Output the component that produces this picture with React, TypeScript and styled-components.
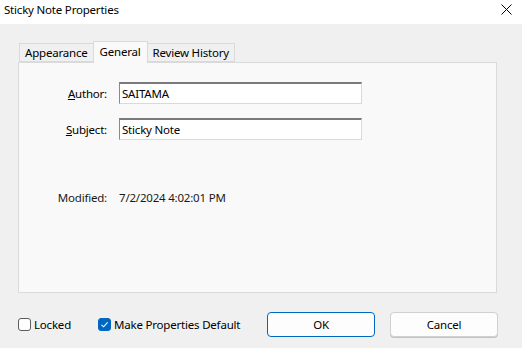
import React from "react";
import styled, { createGlobalStyle } from "styled-components";

const GlobalStyle = createGlobalStyle`
  html, body {
    margin: 0;
    padding: 0;
    background: #f0f0f0;
  }
  body {
    font-family: "Noto Sans", "Open Sans", sans-serif;
    font-size: 11.5px;
    letter-spacing: -0.2px;
    color: #000;
  }
`;

const Window = styled.div`
  width: 522px;
  height: 348px;
  display: flex;
  flex-direction: column;
  background: #f0f0f0;
  overflow: hidden;
`;

const TitleBar = styled.div`
  height: 24px;
  background: #ffffff;
  display: flex;
  align-items: center;
  justify-content: space-between;
  padding: 0 10px 6px 4px;
  box-sizing: border-box;
`;

const Title = styled.span`
  font-size: 11.5px;
`;

const CloseButton = styled.button`
  border: none;
  background: none;
  padding: 0;
  width: 12px;
  height: 12px;
  display: flex;
  align-items: center;
  justify-content: center;
`;

const Body = styled.div`
  padding: 17px 25px 0 18px;
  display: flex;
  flex-direction: column;
`;

const TabStrip = styled.div`
  display: flex;
  align-items: flex-end;
  height: 21px;
  padding-left: 1px;
  position: relative;
  z-index: 1;
`;

const Tab = styled.div<{ $active?: boolean }>`
  height: ${(p) => (p.$active ? "22px" : "19px")};
  margin-bottom: ${(p) => (p.$active ? "-1px" : "0")};
  box-sizing: border-box;
  padding: ${(p) => (p.$active ? "0 6px 2px" : "0 5px")};
  display: flex;
  align-items: center;
  background: ${(p) => (p.$active ? "#f9f9f9" : "#f0f0f0")};
  border: 1px solid #dadada;
  border-bottom: ${(p) => (p.$active ? "none" : "1px solid #dadada")};
  margin-left: ${(p) => (p.$active ? "-1px" : "0")};
  margin-right: ${(p) => (p.$active ? "-1px" : "0")};
`;

const Panel = styled.div`
  height: 231px;
  box-sizing: border-box;
  background: #f9f9f9;
  border: 1px solid #dadada;
  padding: 19px 0 0 0;
  display: flex;
  flex-direction: column;
`;

const FormGrid = styled.div`
  display: grid;
  grid-template-columns: 88px 243px;
  column-gap: 12px;
  row-gap: 14px;
  align-items: center;
`;

const Label = styled.label`
  text-align: right;
`;

const Key = styled.span`
  text-decoration: underline;
`;

const TextInput = styled.input`
  height: 22px;
  box-sizing: border-box;
  border: 1px solid #d9d9d9;
  border-top: 2px solid #7a7a7a;
  border-left: 1px solid #8a8a8a;
  background: #ffffff;
  font-family: inherit;
  font-size: 11.5px;
  letter-spacing: -0.2px;
  padding: 0 2px 1px;
  outline: none;
`;

const InfoRow = styled.div`
  display: grid;
  grid-template-columns: 88px auto;
  column-gap: 12px;
  margin-top: 50px;
  color: #1a1a1a;
`;

const InfoLabel = styled.span`
  text-align: right;
`;

const Footer = styled.div`
  display: flex;
  align-items: center;
  height: 25px;
  margin-top: 19px;
`;

const CheckLabel = styled.label<{ $width: number }>`
  display: flex;
  align-items: center;
  gap: 3px;
  flex: none;
  width: ${(p) => p.$width}px;
  white-space: nowrap;
`;

const Box = styled.span<{ $checked?: boolean }>`
  width: 13px;
  height: 13px;
  box-sizing: border-box;
  border-radius: 3px;
  border: 1px solid ${(p) => (p.$checked ? "#0067c0" : "#5d5d5d")};
  background: ${(p) => (p.$checked ? "#0067c0" : "#ffffff")};
  display: flex;
  align-items: center;
  justify-content: center;
`;

const Buttons = styled.div`
  display: flex;
  gap: 15px;
  margin-left: auto;
  margin-right: -1px;
`;

const Button = styled.button<{ $primary?: boolean }>`
  width: 108px;
  height: 25px;
  box-sizing: border-box;
  border-radius: 4px;
  border: 1px solid ${(p) => (p.$primary ? "#0067c0" : "#d0d0d0")};
  box-shadow: ${(p) => (p.$primary ? "none" : "0 1px 0 #c4c4c4")};
  background: #fdfdfd;
  font-family: inherit;
  font-size: 11.5px;
  letter-spacing: -0.2px;
  color: #000;
  padding: 0 0 1px;
`;

export default function App() {
  return (
    <Window>
      <GlobalStyle />
      <TitleBar>
        <Title>Sticky Note Properties</Title>
        <CloseButton aria-label="Close">
          <svg width="11" height="11" viewBox="0 0 11 11">
            <path d="M0.5 0.5 L10.5 10.5 M10.5 0.5 L0.5 10.5" stroke="#000" strokeWidth="1" />
          </svg>
        </CloseButton>
      </TitleBar>
      <Body>
        <TabStrip>
          <Tab>Appearance</Tab>
          <Tab $active>General</Tab>
          <Tab>Review History</Tab>
        </TabStrip>
        <Panel>
          <FormGrid>
            <Label>
              <Key>A</Key>uthor:
            </Label>
            <TextInput defaultValue="SAITAMA" />
            <Label>
              <Key>S</Key>ubject:
            </Label>
            <TextInput defaultValue="Sticky Note" />
          </FormGrid>
          <InfoRow>
            <InfoLabel>Modified:</InfoLabel>
            <span>7/2/2024 4:02:01 PM</span>
          </InfoRow>
        </Panel>
        <Footer>
          <CheckLabel $width={80}>
            <Box />
            Locked
          </CheckLabel>
          <CheckLabel $width={150}>
            <Box $checked>
              <svg width="9" height="9" viewBox="0 0 9 9">
                <path d="M1.5 4.8 L3.6 6.8 L7.6 2.4" fill="none" stroke="#fff" strokeWidth="1.1" />
              </svg>
            </Box>
            Make Properties Default
          </CheckLabel>
          <Buttons>
            <Button $primary>OK</Button>
            <Button>Cancel</Button>
          </Buttons>
        </Footer>
      </Body>
    </Window>
  );
}
